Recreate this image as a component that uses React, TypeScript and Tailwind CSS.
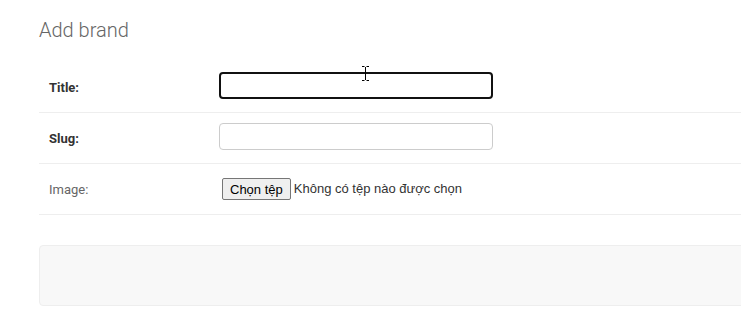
export default function App() {
  return (
    <div className="w-[741px] h-[309px] overflow-hidden bg-white font-['Roboto',sans-serif] relative">
      <div className="ml-[39px] w-[760px] pt-[18px]">
        <h1 className="text-[20px] font-light text-[#666] leading-[24px]">Add brand</h1>

        <div className="mt-[20px]">
          {/* Title */}
          <div className="h-[51px] border-b border-[#eee] flex items-start pl-[10px] pt-[10px]">
            <label className="w-[170px] pt-[8px] text-[13px] leading-[16px] font-bold text-[#333]">Title:</label>
            <input
              className="w-[274px] h-[27px] rounded-[4px] border-2 border-[#111] outline-none bg-white"
              type="text"
            />
          </div>

          {/* Slug */}
          <div className="h-[51px] border-b border-[#eee] flex items-start pl-[10px] pt-[10px]">
            <label className="w-[170px] pt-[8px] text-[13px] leading-[16px] font-bold text-[#333]">Slug:</label>
            <input
              className="w-[274px] h-[27px] rounded-[4px] border border-[#ccc] outline-none bg-white"
              type="text"
            />
          </div>

          {/* Image */}
          <div className="h-[51px] border-b border-[#eee] flex items-start pl-[10px] pt-[14px]">
            <label className="w-[170px] pt-[4px] text-[13px] leading-[16px] text-[#666]">Image:</label>
            <div className="flex items-center ml-[3px]">
              <button className="h-[22px] px-[7px] border border-[#767676] rounded-[2px] bg-[#efefef] text-[13px] text-black font-['Liberation_Sans',sans-serif] leading-none">
                Chọn tệp
              </button>
              <span className="ml-[3px] text-[13px] text-[#333] font-['Liberation_Sans',sans-serif]">
                Không có tệp nào được chọn
              </span>
            </div>
          </div>
        </div>

        {/* submit row */}
        <div className="mt-[30px] h-[61px] bg-[#f8f8f8] border border-[#eee] rounded-[4px]" />
      </div>

      {/* mouse I-beam cursor */}
      <svg className="absolute left-[361px] top-[66px]" width="9" height="15" viewBox="0 0 9 15">
        <path d="M1 0.5h2.5M5.5 0.5H8M4.5 1v13M1 14.5h2.5M5.5 14.5H8" stroke="#000" strokeWidth="1" fill="none" />
      </svg>
    </div>
  )
}
